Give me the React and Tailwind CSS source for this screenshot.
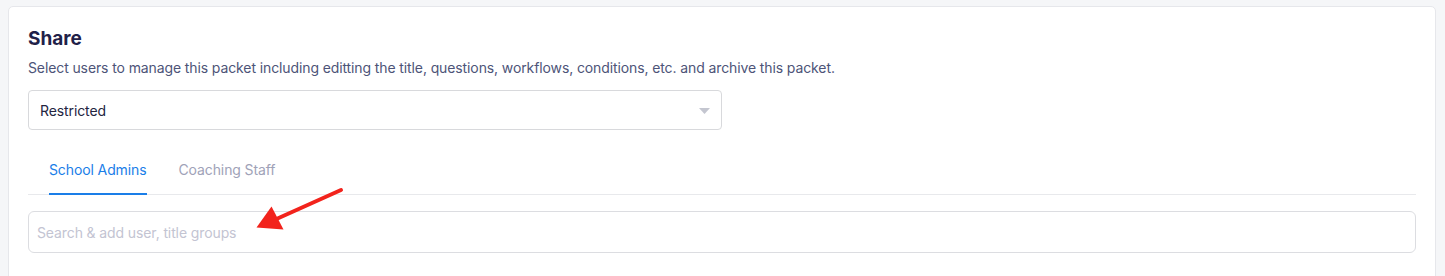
import { useState } from 'react';

const tabs = ['School Admins', 'Coaching Staff'];

const App = () => {
    const [active, setActive] = useState(0);

    return (
        <div className="min-h-[276px] bg-[#f5f6f8] pt-[6px] pl-[8px] pr-[9px] font-['Inter','Liberation_Sans',sans-serif] tracking-[-0.11px] relative overflow-hidden">
            <div className="bg-white border border-[#e6e7eb] rounded-[5px] px-[19px] pt-[20px] pb-10 min-h-[300px]">
                <h2 className="text-[19px] leading-6 font-bold text-[#1f2148] tracking-normal">Share</h2>
                <p className="mt-[7px] text-[14px] leading-5 text-[#4d5478]">
                    Select users to manage this packet including editting the title, questions, workflows, conditions, etc. and archive this packet.
                </p>

                {/* dropdown */}
                <div className="mt-3 w-[694px] h-10 border border-[#d8d9dc] rounded-[4px] flex items-center justify-between pl-[11px] pr-[11px]">
                    <span className="text-[14px] text-[#23253f]">Restricted</span>
                    <svg width="11" height="6" viewBox="0 0 11 6" className="mt-[2px]">
                        <path d="M0 0 L11 0 L5.5 6 Z" fill="#c4c6d0" />
                    </svg>
                </div>

                {/* tabs */}
                <div className="mt-[30px] flex gap-8 pl-[21px] border-b border-[#e8e9ec]">
                    {tabs.map((t, i) => (
                        <button
                            key={t}
                            onClick={() => setActive(i)}
                            className={`-mb-px pb-[13px] text-[14px] leading-5 border-b-2 ${
                                active === i ? 'text-[#1a7ee8] border-[#1a7ee8]' : 'text-[#a0a2b8] border-transparent'
                            }`}
                        >
                            {t}
                        </button>
                    ))}
                </div>

                {/* search */}
                <div className="mt-4 h-[42px] border border-[#dcdde1] rounded-[6px] flex items-center pl-[8px]">
                    <input
                        className="w-full outline-none text-[14px] text-[#23253f] placeholder:text-[#c3c4d2]"
                        placeholder="Search & add user, title groups"
                    />
                </div>
            </div>

            {/* annotation arrow */}
            <svg className="absolute left-0 top-0 pointer-events-none" width="1445" height="276">
                <line x1="341" y1="190" x2="272" y2="221" stroke="#f2231c" strokeWidth="4" strokeLinecap="round" />
                <path d="M256.5 227.5 L271.5 206.5 L283.5 229.5 Z" fill="#f2231c" />
            </svg>
        </div>
    );
};

export default App;
